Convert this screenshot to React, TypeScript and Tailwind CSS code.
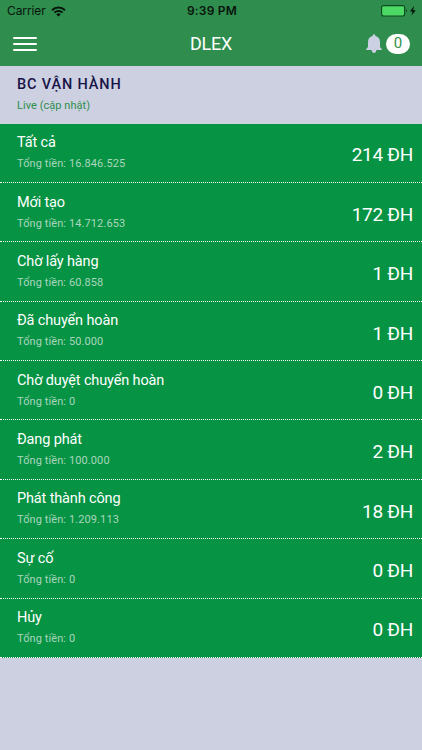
type Report = {
  label: string;
  total: string;
  count: number;
};

const REPORTS: Report[] = [
  { label: "Tất cả", total: "16.846.525", count: 214 },
  { label: "Mới tạo", total: "14.712.653", count: 172 },
  { label: "Chờ lấy hàng", total: "60.858", count: 1 },
  { label: "Đã chuyển hoàn", total: "50.000", count: 1 },
  { label: "Chờ duyệt chuyển hoàn", total: "0", count: 0 },
  { label: "Đang phát", total: "100.000", count: 2 },
  { label: "Phát thành công", total: "1.209.113", count: 18 },
  { label: "Sự cố", total: "0", count: 0 },
  { label: "Hủy", total: "0", count: 0 },
];

function WifiIcon() {
  return (
    <svg width="15" height="11" viewBox="0 0 15 11" fill="none" stroke="#07140b">
      <path d="M1 4.2a9.3 9.3 0 0 1 13 0" strokeWidth="2" />
      <path d="M3.4 6.7a5.8 5.8 0 0 1 8.2 0" strokeWidth="1.8" />
      <path d="M7.5 10.6 5.3 8.4a3.2 3.2 0 0 1 4.4 0z" fill="#07140b" stroke="none" />
    </svg>
  );
}

function BatteryIcon() {
  return (
    <svg width="36" height="12" viewBox="0 0 36 12">
      <rect x="0.6" y="0.6" width="23" height="10.4" rx="2" fill="#4cd964" stroke="#0d4a20" strokeWidth="1.1" />
      <path d="M25 4.2c1.3.4 1.3 2.8 0 3.2z" fill="#0d4a20" />
      <path d="M33.2.8 28.9 6.4h2.6l-1.1 4.4 4.4-5.6h-2.7z" fill="#07140b" />
    </svg>
  );
}

function BellIcon() {
  return (
    <svg width="16" height="20" viewBox="0 0 16 20" fill="#cbd0e2">
      <path d="M8 .3c.8 0 1.3.6 1.3 1.3v.5c3 .6 4.7 2.900 4.700 5.900v4.300c0 .9.500 1.600 1.800 2.700v1H.2v-1c1.300-1.100 1.800-1.800 1.800-2.700V8c0-3 1.700-5.300 4.700-5.900v-.5C6.700.9 7.200.3 8 .3z" />
      <path d="M5.700 16h4.600v.6a2.300 2.300 0 0 1-4.600 0z" />
    </svg>
  );
}

export default function App() {
  return (
    <div className="flex h-screen w-full flex-col overflow-hidden bg-[#ccd0e1] font-['Roboto',sans-serif]">
      <header className="h-[65.5px] flex-shrink-0 bg-[#2f8e4e]">
        {/* Status bar */}
        <div className="grid h-[22px] grid-cols-3 items-center pr-[5px] pl-[7px] font-['Inter',sans-serif] text-[12px] text-[#07140b]">
          <div className="flex items-center gap-[5px]">
            <span className="tracking-[-0.1px]">Carrier</span>
            <WifiIcon />
          </div>
          <span className="text-center font-semibold tracking-[0.2px]">9:39 PM</span>
          <div className="flex justify-end">
            <BatteryIcon />
          </div>
        </div>

        {/* Navigation */}
        <div className="grid h-[43px] grid-cols-3 items-center pr-[12px] pl-[13px]">
          <button className="flex w-6 flex-col gap-[4px]" aria-label="Menu">
            <span className="h-[2px] w-full rounded-full bg-white" />
            <span className="h-[2px] w-full rounded-full bg-white" />
            <span className="h-[2px] w-full rounded-full bg-white" />
          </button>
          <h1 className="pr-px text-center text-[18px] tracking-[-0.2px] text-white">DLEX</h1>
          <div className="flex items-center justify-end gap-[4px]">
            <BellIcon />
            <span className="flex h-5 w-6 items-center justify-center rounded-full bg-white text-[15px] text-[#2f8e4e]">
              0
            </span>
          </div>
        </div>
      </header>

      <section className="h-[58px] flex-shrink-0 px-[17px] pt-[9px]">
        <h2 className="text-[14.5px] leading-[20px] font-medium tracking-[0.85px] text-[#1a1446]">BC VẬN HÀNH</h2>
        <p className="mt-[3px] text-[11px] leading-[16px] tracking-[0.05px] text-[#2f8e4e]">Live (cập nhật)</p>
      </section>

      <ul className="flex-shrink-0">
        {REPORTS.map((r) => (
          <li
            key={r.label}
            className="flex h-[59.375px] items-center justify-between border-b border-dotted border-white bg-[#069344] pr-[9px] pl-[17px]"
          >
            <div>
              <p className="text-[14.5px] leading-[20px] tracking-[-0.14px] text-white">{r.label}</p>
              <p className="mt-[3px] text-[11px] leading-[16px] tracking-[0.1px] text-[#a9d6bd]">
                Tổng tiền: {r.total}
              </p>
            </div>
            <span className="pt-[6px] text-[19px] tracking-[-0.3px] text-white">{r.count} ĐH</span>
          </li>
        ))}
      </ul>
    </div>
  );
}
